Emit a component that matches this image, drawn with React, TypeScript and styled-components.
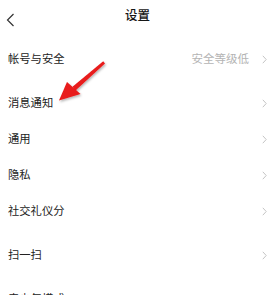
import React from "react";
import styled, { createGlobalStyle } from "styled-components";

const Global = createGlobalStyle`
  html, body { margin: 0; padding: 0; background: #ffffff; }
  body { font-family: "Noto Sans CJK SC", "Noto Sans", sans-serif; overflow: hidden; }
`;

const Page = styled.div`
  position: relative;
  width: 275px;
  height: 295px;
  overflow: hidden;
  background: #ffffff;
  display: flex;
  flex-direction: column;
`;

const Header = styled.div`
  height: 30px;
  display: flex;
  align-items: center;
  justify-content: center;
  position: relative;
  flex-shrink: 0;
`;

const Back = styled.div`
  position: absolute;
  left: 6px;
  top: 8px;
  width: 9px;
  height: 14px;
`;

const Title = styled.div`
  font-size: 12.5px;
  font-weight: 500;
  color: #161616;
  line-height: 1;
`;

const Groups = styled.div`
  margin-top: 11px;
  display: flex;
  flex-direction: column;
  gap: 8px;
`;

const Group = styled.div`
  display: flex;
  flex-direction: column;
`;

const Row = styled.div`
  height: 36px;
  display: flex;
  align-items: center;
  padding: 0 8px 0 8px;
  flex-shrink: 0;
`;

const Label = styled.div`
  flex: 1;
  font-size: 11.3px;
  color: #222222;
  line-height: 1;
`;

const Value = styled.div`
  font-size: 11.5px;
  color: #b4b4b4;
  line-height: 1;
  margin-right: 13px;
`;

const Chevron = styled.div`
  width: 5px;
  height: 9px;
  display: flex;
`;

const Arrow = styled.svg`
  position: absolute;
  left: 0;
  top: 0;
  pointer-events: none;
`;

const ChevronIcon = () => (
  <Chevron>
    <svg width="5" height="9" viewBox="0 0 5 9">
      <path d="M0.8 0.8 L4.2 4.5 L0.8 8.2" fill="none" stroke="#c4c4c4" strokeWidth="1" />
    </svg>
  </Chevron>
);

const groups: { label: string; value?: string }[][] = [
  [{ label: "帐号与安全", value: "安全等级低" }],
  [{ label: "消息通知" }, { label: "通用" }, { label: "隐私" }, { label: "社交礼仪分" }],
  [{ label: "扫一扫" }],
  [{ label: "青少年模式" }],
];

export default function App() {
  return (
    <>
      <Global />
      <Page>
        <Header>
          <Back>
            <svg width="9" height="14" viewBox="0 0 9 14">
              <path d="M7.5 1 L1.5 7 L7.5 13" fill="none" stroke="#333" strokeWidth="1.2" />
            </svg>
          </Back>
          <Title>设置</Title>
        </Header>
        <Groups>
          {groups.map((g, gi) => (
            <Group key={gi}>
              {g.map((r) => (
                <Row key={r.label}>
                  <Label>{r.label}</Label>
                  {r.value && <Value>{r.value}</Value>}
                  <ChevronIcon />
                </Row>
              ))}
            </Group>
          ))}
        </Groups>
        <Arrow width="275" height="295" viewBox="0 0 275 295">
          <defs>
            <filter id="sh" x="-20%" y="-20%" width="140%" height="140%">
              <feDropShadow dx="1" dy="1.5" stdDeviation="1.2" floodColor="#000" floodOpacity="0.3" />
            </filter>
          </defs>
          <g filter="url(#sh)" fill="#e81a1a">
            <polygon points="103.2,61.2 105,63.4 75.5,90.5 72.5,86.8" />
            <polygon points="59,100.5 67,82 80.5,94" />
          </g>
        </Arrow>
      </Page>
    </>
  );
}
